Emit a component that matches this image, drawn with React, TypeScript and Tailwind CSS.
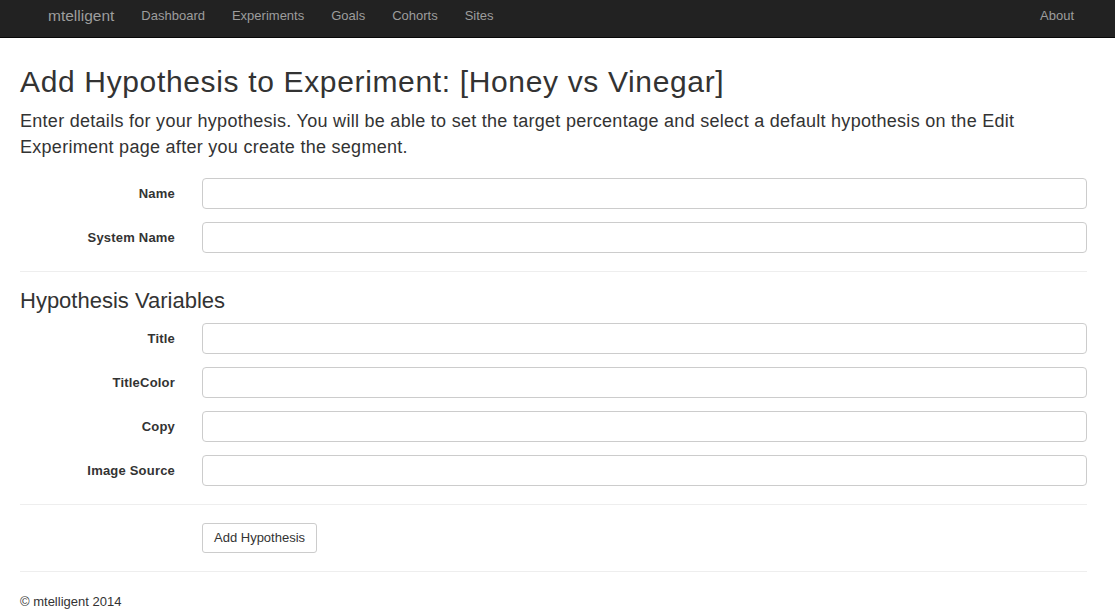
export default function App() {
  const navLinks = ['Dashboard', 'Experiments', 'Goals', 'Cohorts', 'Sites']

  const Field = ({ label }: { label: string }) => (
    <div className="flex items-center h-[31px] mb-[13px]">
      <label className="w-[155px] shrink-0 text-right text-[13px] font-bold tracking-[0.2px] text-[#333]">{label}</label>
      <input
        type="text"
        className="ml-[27px] flex-1 h-[31px] rounded-[4px] border border-[#ccc] bg-white px-3 text-[13px] outline-none"
      />
    </div>
  )

  return (
    <div className="min-h-screen bg-white text-[#333]" style={{ fontFamily: '"Liberation Sans", Arial, sans-serif' }}>
      {/* Navbar */}
      <nav className="h-[38px] bg-[#222] border-b border-[#080808]">
        <div className="flex items-center w-full pl-[48px] pr-[41px] pt-[7px]">
          <span className="text-[15.5px] leading-[18px] text-[#9d9d9d] mr-[27px]">mtelligent</span>
          <div className="flex items-center gap-[27px]">
            {navLinks.map((l) => (
              <span key={l} className="text-[13px] leading-[18px] text-[#9d9d9d]">
                {l}
              </span>
            ))}
          </div>
          <span className="ml-auto text-[13px] leading-[18px] text-[#9d9d9d]">About</span>
        </div>
      </nav>

      {/* Content */}
      <div className="pl-[20px] pr-[28px]">
        <h2 className="text-[30px] leading-[33px] tracking-[0.65px] mt-[27px] mb-[10px] text-[#333]">
          Add Hypothesis to Experiment: [Honey vs Vinegar]
        </h2>
        <p className="text-[18px] leading-[26px] tracking-[0.28px] mb-[18px]">
          Enter details for your hypothesis. You will be able to set the target percentage and select a default hypothesis on the Edit Experiment page after you create the segment.
        </p>

        <Field label="Name" />
        <Field label="System Name" />

        <hr className="border-t border-[#eee] mt-[18px] mb-[17px]" />

        <h4 className="text-[22px] leading-[24px] mb-[10px]">Hypothesis Variables</h4>

        <Field label="Title" />
        <Field label="TitleColor" />
        <Field label="Copy" />
        <Field label="Image Source" />

        <hr className="border-t border-[#eee] mt-[18px] mb-[18px]" />

        <div className="pl-[182px]">
          <button className="h-[30px] px-[11px] rounded-[3px] border border-[#ccc] bg-white text-[13px] text-[#333]">
            Add Hypothesis
          </button>
        </div>

        <hr className="border-t border-[#eee] mt-[18px] mb-[20px]" />

        <footer className="text-[13px]">© mtelligent 2014</footer>
      </div>
    </div>
  )
}
